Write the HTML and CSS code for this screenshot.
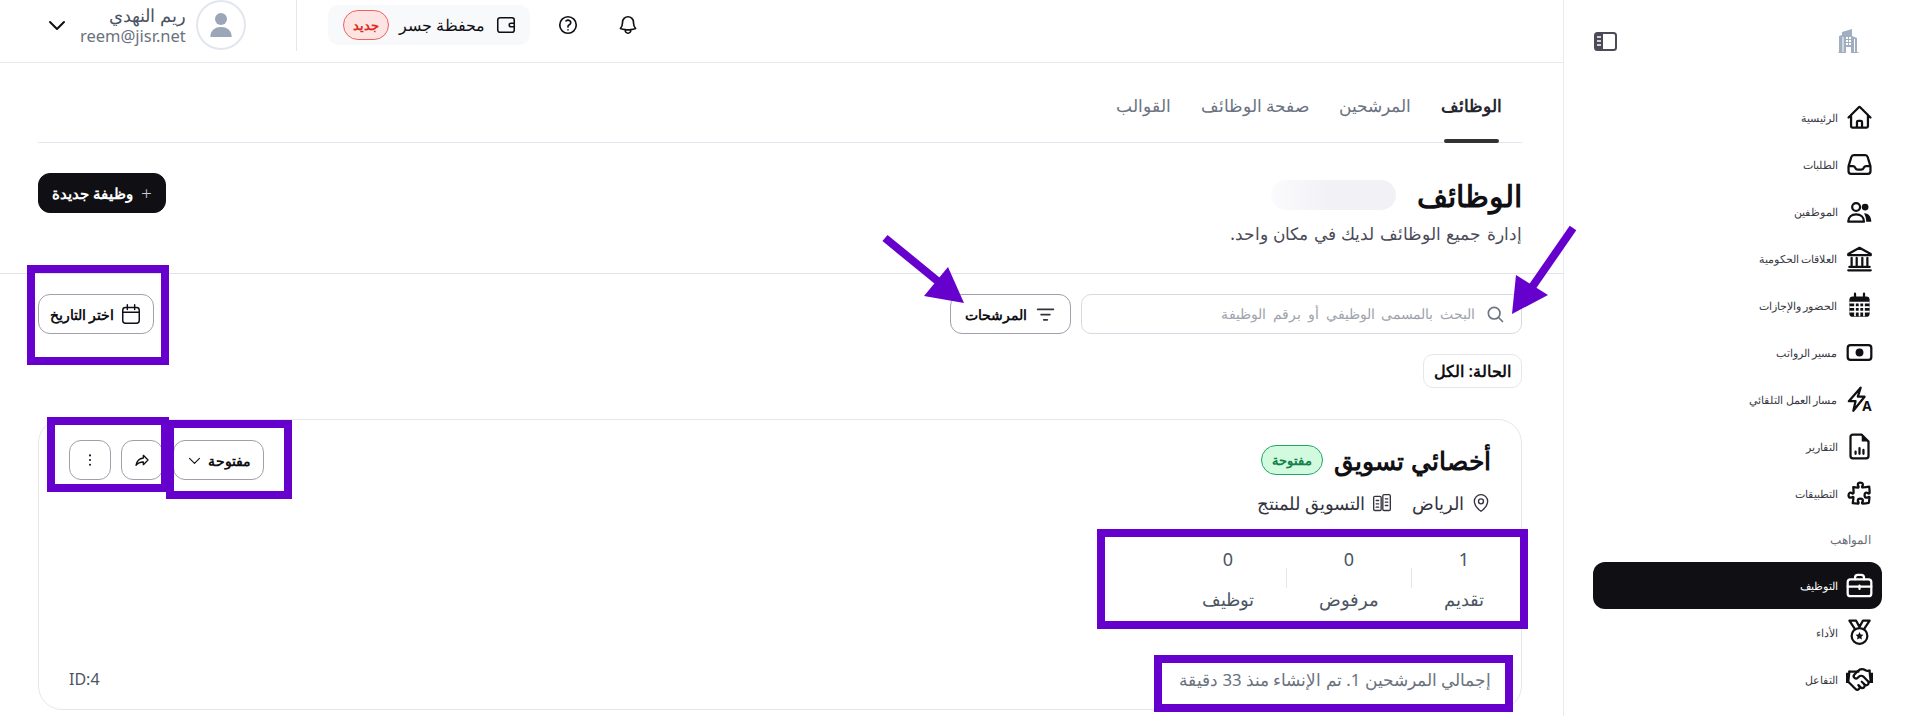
FILE: index.html
```html
<!DOCTYPE html>
<html lang="ar" dir="rtl">
<head>
    <meta charset="UTF-8">
    <link rel="stylesheet" href="styles.css">
    <title>الوظائف</title>
</head>
<body>
<div class="app">

    <aside class="sidebar">
        <div class="side-top">
            <svg class="logo" viewBox="0 0 24 24"><path d="M1 24l1-1V7l3-1V3l10-3v7l5 2v14l3 1z M9 8v2h2V8z M12 8v2h2V8z M9 11v2h2v-2z M12 11v2h2v-2z M9 14v2h2v-2z M12 14v2h2v-2z M9 18v6h5v-6z M5.500 8v15h1V8z M17 10v13h1V10z" fill-rule="evenodd"/></svg>
            <svg class="collapse" viewBox="0 0 23 19"><rect x="1" y="1" width="21" height="17" rx="2.500" fill="#fff" stroke="#4b4b57" stroke-width="2"/><path d="M1 3a2 2 0 0 1 2-2h6v17H3a2 2 0 0 1-2-2z" fill="#4b4b57"/><path d="M3 5h4M3 9h4M3 13h4" stroke="#fff" stroke-width="1.500"/></svg>
        </div>
        <nav class="side-nav">
            <a class="side-item"><svg class="icon" viewBox="0 0 24 24"><path d="M2.250 12l8.954-8.955c.44-.439 1.152-.439 1.591 0L21.750 12M4.500 9.750v10.125c0 .621.504 1.125 1.125 1.125H9.750v-4.875c0-.621.504-1.125 1.125-1.125h2.250c.621 0 1.125.504 1.125 1.125V21h4.125c.621 0 1.125-.504 1.125-1.125V9.750M8.250 21h8.250"/></svg>الرئيسية</a>
            <a class="side-item"><svg class="icon" viewBox="0 0 24 24"><path d="M2.250 13.500h3.860a2.250 2.250 0 012.012 1.244l.256.512a2.250 2.250 0 002.013 1.244h3.218a2.250 2.250 0 002.013-1.244l.256-.512a2.250 2.250 0 012.013-1.244h3.859m-19.500.338V18a2.250 2.250 0 002.250 2.250h15A2.250 2.250 0 0021.750 18v-4.162c0-.224-.034-.447-.1-.661L19.240 5.338a2.250 2.250 0 00-2.150-1.588H6.911a2.250 2.250 0 00-2.150 1.588L2.350 13.177a2.250 2.250 0 00-.1.661z"/></svg>الطلبات</a>
            <a class="side-item"><svg class="icon" viewBox="0 0 24 24"><circle cx="9" cy="8" r="3.500"/><path d="M2 21c0-4 3-6.500 7-6.500s7 2.500 7 6.500z"/><circle class="solid" cx="17" cy="8" r="3"/><path class="solid" d="M16 13.500c4 0 6.500 3 6.500 7.500h-4.500c0-3-1-5.500-2-7.500z"/></svg>الموظفين</a>
            <a class="side-item"><svg class="icon" viewBox="0 0 24 24"><path d="M12 2.500L22 8v1H2V8z"/><path d="M5 11.500v6.500M9.500 11.500v6.500M14.500 11.500v6.500M19 11.500v6.500M3 19.500h18M2 22.500h20"/></svg>العلاقات الحكومية</a>
            <a class="side-item"><svg class="icon" viewBox="0 0 24 24"><rect class="solid" x="3" y="4" width="18" height="18" rx="3"/><path d="M8 1.500v4M16 1.500v4"/><path class="cut" d="M3 9.500h18M3 13.500h18M3 17.500h18M8 9.500v12M12 9.500v12M16 9.500v12"/></svg>الحضور والإجازات</a>
            <a class="side-item"><svg class="icon" viewBox="0 0 24 24"><rect x="1.500" y="5.500" width="21" height="13" rx="2.500"/><circle class="solid" cx="12" cy="12" r="3.500"/></svg>مسير الرواتب</a>
            <a class="side-item"><svg class="icon" viewBox="0 0 24 24"><path d="M13 1.500L2.500 13.500h6L6.500 22l10-12.500h-6z"/><text class="icon-letter" x="14.500" y="22">A</text></svg>مسار العمل التلقائي</a>
            <a class="side-item"><svg class="icon" viewBox="0 0 24 24"><path d="M6 1.500h8l6 6v13a2 2 0 0 1-2 2H6a2 2 0 0 1-2-2v-17a2 2 0 0 1 2-2z"/><path class="solid" d="M14 1.500l6 6h-6z"/><path d="M8.500 18.500v-2M12 18.500v-5M15.500 18.500v-3.500"/></svg>التقارير</a>
            <a class="side-item"><svg class="icon" viewBox="0 0 24 24"><path d="M14.250 6.087c0-.355.186-.676.401-.959.221-.29.349-.634.349-1.003 0-1.036-1.007-1.875-2.250-1.875s-2.250.84-2.250 1.875c0 .369.128.713.349 1.003.215.283.401.604.401.959a.64.64 0 01-.657.643 48.390 48.390 0 01-4.163-.3c.186 1.613.293 3.250.315 4.907a.656.656 0 01-.658.663c-.355 0-.676-.186-.959-.401a1.647 1.647 0 00-1.003-.349c-1.036 0-1.875 1.007-1.875 2.250s.84 2.250 1.875 2.250c.369 0 .713-.128 1.003-.349.283-.215.604-.401.959-.401.31 0 .555.26.532.57a48.039 48.039 0 01-.642 5.056c1.518.19 3.058.309 4.616.354a.64.64 0 00.657-.643c0-.355-.186-.676-.401-.959a1.647 1.647 0 01-.349-1.003c0-1.035 1.008-1.875 2.250-1.875 1.243 0 2.250.84 2.250 1.875 0 .369-.128.713-.349 1.003-.215.283-.4.604-.4.959 0 .333.277.599.61.58a48.100 48.100 0 005.427-.63 48.050 48.050 0 00.582-4.717.532.532 0 00-.533-.57c-.355 0-.676.186-.959.401-.29.221-.634.349-1.003.349-1.035 0-1.875-1.007-1.875-2.250s.84-2.250 1.875-2.250c.37 0 .713.128 1.003.349.283.215.604.401.96.401a.656.656 0 00.658-.663 48.422 48.422 0 00-.37-5.360c-1.886.342-3.810.574-5.766.689a.578.578 0 01-.61-.58z"/></svg>التطبيقات</a>
            <div class="side-label">المواهب</div>
            <a class="side-item active"><svg class="icon" viewBox="0 0 24 24"><rect x="1.500" y="6.500" width="21" height="15" rx="2.500"/><path d="M8 6.500V5a2.500 2.500 0 0 1 2.500-2.500h3A2.500 2.500 0 0 1 16 5v1.500M1.500 13h21M12 12v3"/></svg>التوظيف</a>
            <a class="side-item"><svg class="icon" viewBox="0 0 24 24"><circle cx="12" cy="15" r="7"/><path d="M8 9L3 1.500H9L12 7l3-5.500h6L16 9"/><path class="solid" d="M12 11.500l1.100 2.300 2.400.3-1.800 1.700.5 2.500-2.200-1.200-2.200 1.200.5-2.500-1.800-1.700 2.400-.3z"/></svg>الأداء</a>
            <a class="side-item"><svg class="icon" viewBox="0 0 24 24"><path d="M11 17l2 2a1 1 0 1 0 3-3"/><path d="M14 14l2.500 2.500a1 1 0 1 0 3-3l-3.880-3.880a3 3 0 0 0-4.240 0l-.88.88a1 1 0 1 1-3-3l2.810-2.810a5.790 5.790 0 0 1 7.060-.87l.47.28a2 2 0 0 0 1.420.25L21 4"/><path d="M21 5l1 9h-2"/><path d="M3 5L2 14l6.500 6.500a1 1 0 1 0 3-3"/><path d="M3 5h8"/><path class="solid" d="M0 6h3l-1 9H0zM24 6h-3l1 9h2z"/></svg>التفاعل</a>
        </nav>
    </aside>

    <main class="main">
        <header class="topbar">
            <button class="top-icon"><svg class="icon" viewBox="0 0 24 24"><path d="M14.857 17.082a23.848 23.848 0 005.454-1.310A8.967 8.967 0 0118 9.750V9A6 6 0 006 9v.75a8.967 8.967 0 01-2.312 6.022c1.733.64 3.560 1.085 5.455 1.310m5.714 0a24.255 24.255 0 01-5.714 0m5.714 0a3 3 0 11-5.714 0"/></svg></button>
            <button class="top-icon"><svg class="icon" viewBox="0 0 24 24"><path d="M9.879 7.519c1.171-1.025 3.071-1.025 4.242 0 1.172 1.025 1.172 2.687 0 3.712-.203.179-.43.326-.67.442-.745.361-1.450.999-1.450 1.827v.75M21 12a9 9 0 11-18 0 9 9 0 0118 0zm-9 5.250h.008v.008H12v-.008z"/></svg></button>
            <div class="wallet">
                <svg class="icon" viewBox="0 0 24 24"><rect x="3" y="4" width="18" height="16" rx="2.500"/><path d="M21 10h-3.500a2 2 0 0 0 0 4H21"/></svg>
                <span>محفظة جسر</span>
                <span class="new-badge">جديد</span>
            </div>
            <div class="top-divider"></div>
            <div class="avatar"><svg viewBox="0 0 24 24"><circle cx="12" cy="7.500" r="4.500"/><path d="M4 21c0-5 3.500-7.500 8-7.500s8 2.500 8 7.500z"/></svg></div>
            <div class="user">
                <div class="user-name">ريم النهدي</div>
                <div class="user-mail">reem@jisr.net</div>
            </div>
            <svg class="icon user-arrow" viewBox="0 0 24 24"><path d="M5 9l7 7 7-7"/></svg>
        </header>

        <div class="section">
            <div class="tabs">
                <a class="tab current">الوظائف</a>
                <a class="tab">المرشحين</a>
                <a class="tab">صفحة الوظائف</a>
                <a class="tab">القوالب</a>
            </div>
        </div>

        <div class="section page-head">
            <div>
                <div class="title-row">
                    <h1>الوظائف</h1>
                    <div class="skeleton"></div>
                </div>
                <p class="subtitle">إدارة جميع الوظائف لديك في مكان واحد.</p>
            </div>
            <button class="btn btn-dark"><span class="plus">+</span>وظيفة جديدة</button>
        </div>

        <div class="section toolbar">
            <div class="search">
                <svg class="icon" viewBox="0 0 24 24"><circle cx="11" cy="11" r="7"/><path d="M16.500 16.500L21 21"/></svg>
                <span>البحث بالمسمى الوظيفي أو برقم الوظيفة</span>
            </div>
            <button class="btn filter-btn"><svg class="icon" viewBox="0 0 24 24"><path d="M3 6h18M7 12h10M10 18h4"/></svg>المرشحات</button>
            <button class="btn date-btn"><svg class="icon" viewBox="0 0 24 24"><rect x="3" y="5" width="18" height="17" rx="3"/><path d="M8 2v5M16 2v5M3 10h18"/></svg>اختر التاريخ</button>
        </div>

        <div class="section">
            <div class="status-pill">الحالة: الكل</div>

            <article class="card">
                <div class="card-top">
                    <div>
                        <div class="job-title">
                            <h2>أخصائي تسويق</h2>
                            <span class="open-badge">مفتوحة</span>
                        </div>
                        <div class="job-meta">
                            <span class="meta"><svg class="icon" viewBox="0 0 24 24"><path d="M20 10c0 6-8 12-8 12s-8-6-8-12a8 8 0 0 1 16 0z"/><circle cx="12" cy="10" r="3"/></svg>الرياض</span>
                            <span class="meta"><svg class="icon" viewBox="0 0 24 24"><rect x="2" y="4" width="9" height="17" rx="1.500"/><rect x="13" y="2" width="9" height="19" rx="1.500"/><path d="M5 9h3M5 13h3M5 17h3M16 7h3M16 11h3M16 15h3"/></svg>التسويق للمنتج</span>
                        </div>
                    </div>
                    <div class="card-actions">
                        <button class="btn status-btn">مفتوحة<svg class="icon" viewBox="0 0 24 24"><path d="M5 9l7 7 7-7"/></svg></button>
                        <button class="btn square-btn"><svg class="icon" viewBox="0 0 24 24"><path d="M14 5l7 7-7 7v-4c-5 0-8 1-11 5 1-6 4-10 11-11z"/></svg></button>
                        <button class="btn square-btn dots"><svg class="icon" viewBox="0 0 24 24"><path d="M12 5v.1M12 12v.1M12 19v.1"/></svg></button>
                    </div>
                </div>

                <div class="stats">
                    <div class="stat"><div class="stat-num">1</div><div class="stat-label">تقديم</div></div>
                    <div class="stat"><div class="stat-num">0</div><div class="stat-label">مرفوض</div></div>
                    <div class="stat"><div class="stat-num">0</div><div class="stat-label">توظيف</div></div>
                </div>

                <div class="card-foot">
                    <span>إجمالي المرشحين 1. تم الإنشاء منذ 33 دقيقة</span>
                    <span class="job-id">ID:4</span>
                </div>
            </article>
        </div>
    </main>
</div>

<svg class="marks" viewBox="0 0 1911 716">
    <rect x="31" y="269" width="134" height="92"/>
    <rect x="51" y="421" width="114" height="67"/>
    <rect x="170" y="424" width="118" height="71"/>
    <rect x="1101" y="533" width="423" height="92"/>
    <rect x="1158" y="659" width="351" height="49"/>
    <path class="arrow-line" d="M1573 228L1528 293"/>
    <path class="arrow-head" d="M1512 314L1516 275L1548 295z"/>
    <path class="arrow-line" d="M885 238L940 283"/>
    <path class="arrow-head" d="M964 303L948 267L924 296z"/>
</svg>
</body>
</html>
```

FILE: styles.css
```css
* {
    box-sizing: border-box;
}
html, body {
    margin: 0;
    height: 716px;
    overflow: hidden;
}
body {
    font-family: 'Noto Sans', sans-serif;
    background-color: #fff;
    color: #101014;
    position: relative;
}
h1, h2, p {
    margin: 0;
}
button {
    font-family: inherit;
    color: inherit;
    background: none;
    border: 0;
    padding: 0;
}
.icon {
    width: 24px;
    height: 24px;
    flex: none;
    fill: none;
    stroke: currentColor;
    stroke-width: 2;
    stroke-linecap: round;
    stroke-linejoin: round;
}
.icon .solid {
    fill: currentColor;
    stroke: none;
}
.icon .cut {
    stroke: #fff;
    stroke-width: 1.5;
    stroke-linecap: butt;
}
.icon-letter {
    font-size: 12px;
    font-weight: 700;
    fill: currentColor;
    stroke: none;
    direction: ltr;
}
.app {
    display: flex;
    height: 716px;
}

/* sidebar */
.sidebar {
    width: 348px;
    flex: none;
    border-left: 1px solid #e9eaef;
    padding: 0 29px 0 29px;
}
.side-top {
    display: flex;
    justify-content: space-between;
    align-items: center;
    height: 94px;
    padding: 0 21px 12px 1px;
}
.logo {
    width: 24px;
    height: 24px;
    fill: #a0aec0;
}
.collapse {
    width: 23px;
    height: 19px;
}
.side-item {
    display: flex;
    align-items: center;
    gap: 8px;
    height: 47px;
    padding: 0 9.5px;
    font-size: 11.3px;
    color: #3a3a44;
    border-radius: 12px;
}
.side-item .icon {
    width: 27px;
    height: 27px;
    color: #101014;
}
.side-item.active {
    background-color: #101014;
    color: #fff;
}
.side-item.active .icon {
    color: #fff;
}
.side-label {
    height: 45px;
    padding: 0 11px;
    line-height: 45px;
    font-size: 12px;
    color: #6b6b76;
}

/* top bar */
.main {
    flex: 1;
    min-width: 0;
}
.topbar {
    display: flex;
    align-items: center;
    height: 63px;
    padding: 0 923px 12px 0;
    border-bottom: 1px solid #e9eaef;
}
.top-icon {
    display: flex;
    align-items: center;
    justify-content: center;
    width: 24px;
    height: 24px;
    margin-left: 36px;
}
.top-icon .icon {
    width: 22px;
    height: 22px;
    stroke-width: 1.8;
}
.wallet {
    display: flex;
    align-items: center;
    gap: 10px;
    height: 40px;
    padding: 0 13px 0 15px;
    margin-right: -10px;
    border-radius: 10px;
    background-color: #f8f9fb;
    font-size: 16px;
}
.wallet .icon {
    width: 22px;
    height: 22px;
    stroke-width: 1.7;
}
.new-badge {
    margin-right: 0;
    width: 46px;
    height: 30px;
    line-height: 28px;
    text-align: center;
    border-radius: 15px;
    border: 1px solid #f0625d;
    background-color: #fde4e3;
    color: #d92d20;
    font-size: 13px;
    font-weight: 700;
}
.top-divider {
    width: 1px;
    height: 52px;
    margin: 0 31px 0 50px;
    background-color: #e5e7eb;
}
.avatar {
    width: 50px;
    height: 50px;
    border: 2px solid #e2e6ee;
    border-radius: 50%;
    display: flex;
    align-items: center;
    justify-content: center;
}
.avatar svg {
    width: 32px;
    height: 32px;
    fill: #9ba6b8;
}
.user {
    margin-right: 10px;
    width: 107px;
}
.user-name {
    font-size: 17.5px;
    line-height: 22px;
    color: #4b5563;
}
.user-mail {
    font-size: 16.5px;
    line-height: 20px;
    color: #6b7280;
    direction: ltr;
    text-align: right;
}
.user-arrow {
    width: 24px;
    height: 24px;
    margin-right: 10px;
}

/* content */
.section {
    padding: 0 41px 0 38px;
}
.tabs {
    display: flex;
    gap: 30px;
    height: 80px;
    padding-right: 20px;
    border-bottom: 1px solid #e2e6ee;
}
.tab {
    position: relative;
    font-size: 16.5px;
    line-height: 85px;
    color: #6b7280;
    font-weight: 500;
}
.tab.current {
    color: #26262e;
    font-weight: 600;
}
.tab.current::after {
    content: "";
    position: absolute;
    right: 3px;
    left: 3px;
    bottom: -1px;
    height: 4px;
    border-radius: 2px;
    background-color: #333;
}
.page-head {
    display: flex;
    justify-content: space-between;
    align-items: flex-start;
    height: 131px;
    padding-top: 30px;
    border-bottom: 1px solid #e2e3ea;
}
.title-row {
    display: flex;
    align-items: center;
    gap: 21px;
    height: 44px;
}
h1 {
    font-size: 30px;
    font-weight: 600;
}
.skeleton {
    width: 125px;
    height: 30px;
    border-radius: 15px;
    background: linear-gradient(to left, #f1f1f6, #f1f1f6 50%, #fbfbfd);
}
.subtitle {
    font-size: 17.35px;
    word-spacing: 1px;
    line-height: 30px;
    margin-top: 1px;
    color: #4b4b57;
}
.btn {
    display: flex;
    align-items: center;
    justify-content: center;
    height: 40px;
    border: 1px solid #a09fab;
    border-radius: 12px;
    font-size: 14px;
    font-weight: 600;
    background-color: #fff;
}
.btn-dark {
    width: 128px;
    gap: 8px;
    font-size: 14.5px;
    background-color: #101014;
    border-color: #101014;
    color: #fff;
}
.plus {
    font-size: 19px;
    font-weight: 300;
    line-height: 1;
    color: #c9c9cf;
}
.toolbar {
    display: flex;
    align-items: center;
    height: 80px;
}
.search {
    display: flex;
    align-items: center;
    gap: 10px;
    width: 441px;
    height: 40px;
    padding: 0 16px;
    border: 1px solid #d8dbe3;
    border-radius: 10px;
    font-size: 14.4px;
    word-spacing: 3px;
    line-height: 24px;
    color: #a0a3ad;
}
.search .icon {
    width: 20px;
    height: 20px;
    color: #6b7280;
}
.filter-btn {
    width: 121px;
    gap: 8px;
    margin-right: 10px;
}
.filter-btn .icon {
    width: 21px;
    height: 21px;
    color: #33333d;
}
.date-btn {
    width: 116px;
    gap: 6px;
    margin-right: auto;
}
.date-btn .icon {
    width: 22px;
    height: 22px;
    stroke-width: 1.6;
}
.status-pill {
    display: inline-block;
    height: 34px;
    line-height: 32px;
    padding: 0 10px;
    border: 1px solid #e5e7eb;
    border-radius: 10px;
    font-size: 16.3px;
    font-weight: 600;
}
.card {
    display: flex;
    flex-direction: column;
    height: 291px;
    margin-top: 31px;
    padding: 18px 30px 18px 30px;
    border: 1px solid #e5e7eb;
    border-radius: 24px;
}
.card-top {
    display: flex;
    justify-content: space-between;
    align-items: flex-start;
}
.job-title {
    display: flex;
    align-items: center;
    gap: 11px;
    height: 44px;
}
h2 {
    font-size: 25.2px;
    font-weight: 600;
}
.open-badge {
    width: 62px;
    height: 30px;
    line-height: 28px;
    text-align: center;
    border: 1px solid #22a565;
    border-radius: 15px;
    background-color: #d1fadf;
    color: #14804a;
    font-size: 13px;
    font-weight: 700;
}
.job-meta {
    display: flex;
    gap: 20px;
    margin-top: 9px;
    font-size: 18px;
    line-height: 24px;
    color: #33333d;
}
.meta {
    display: flex;
    align-items: center;
    gap: 7px;
}
.meta .icon {
    width: 20px;
    height: 20px;
    stroke-width: 1.6;
}
.card-actions {
    display: flex;
    gap: 10px;
    margin-top: 2px;
}
.status-btn {
    width: 91px;
    gap: 5px;
}
.status-btn .icon {
    width: 17px;
    height: 17px;
    stroke-width: 1.6;
}
.square-btn {
    width: 42px;
}
.square-btn .icon {
    width: 16px;
    height: 16px;
}
.dots .icon {
    stroke-width: 3;
}
.stats {
    display: flex;
    margin: 33px 7px 0 0;
}
.stat {
    position: relative;
    padding: 0 32.5px;
    text-align: center;
    font-size: 18px;
    color: #4b5563;
}
.stat:first-child {
    padding-right: 0;
    padding-left: 32.5px;
}
.stat + .stat::before {
    content: "";
    position: absolute;
    right: 0;
    top: 20px;
    height: 20px;
    width: 1px;
    background-color: #e5e7eb;
}
.stat-num {
    line-height: 22px;
}
.stat-label {
    margin-top: 17px;
    line-height: 24px;
}
.card-foot {
    display: flex;
    justify-content: space-between;
    align-items: center;
    margin-top: auto;
    height: 24px;
    font-size: 16.8px;
    color: #6b7280;
}
.job-id {
    direction: ltr;
    font-size: 16px;
    color: #4b5563;
}

/* purple notes drawn over the screenshot */
.marks {
    position: absolute;
    top: 0;
    left: 0;
    width: 1911px;
    height: 716px;
    pointer-events: none;
}
.marks rect {
    fill: none;
    stroke: #6600cc;
    stroke-width: 8;
}
.arrow-line {
    fill: none;
    stroke: #6600cc;
    stroke-width: 8;
}
.arrow-head {
    fill: #6600cc;
}
```
